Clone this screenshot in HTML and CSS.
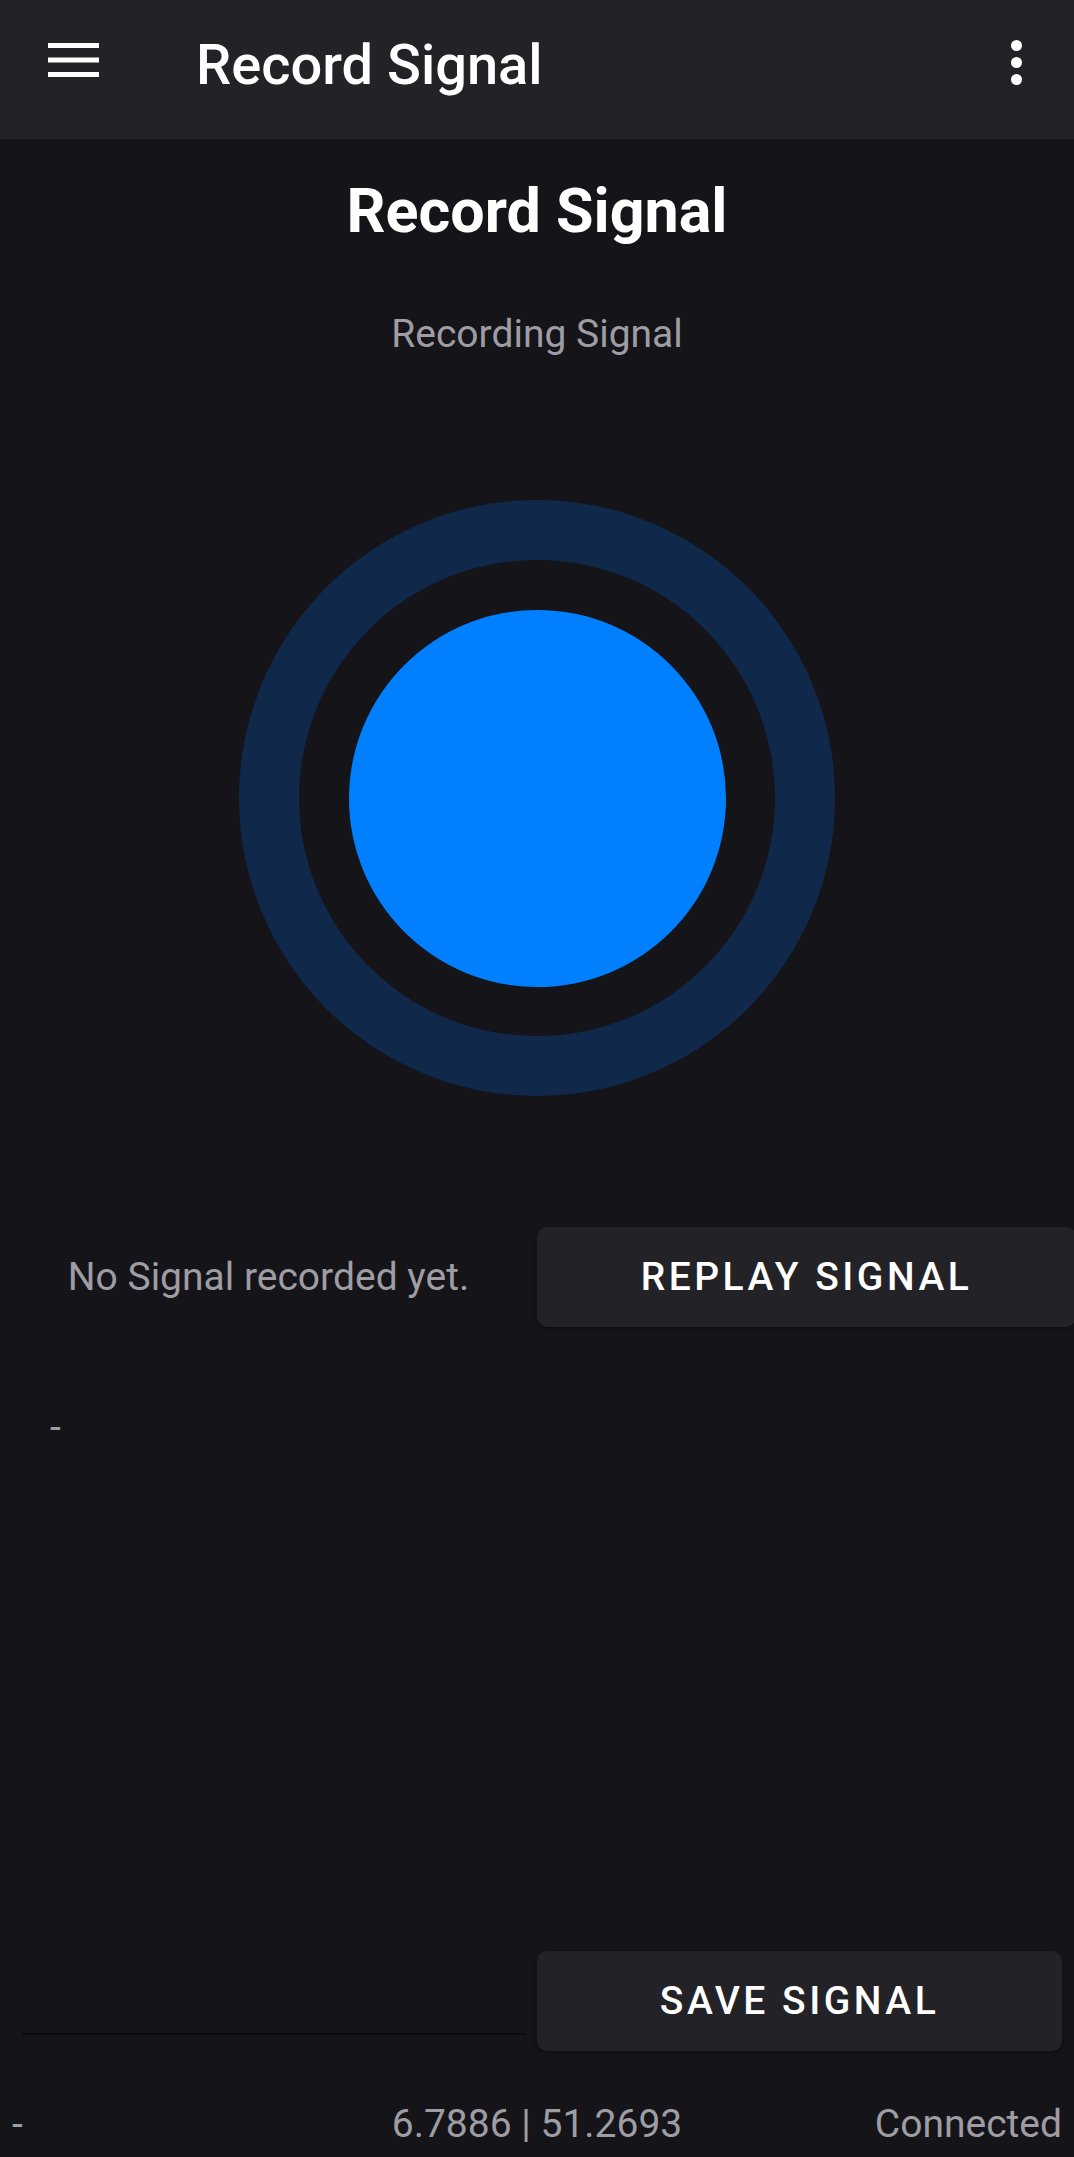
FILE: index.html
```html
<!DOCTYPE html>
<html lang="en">
<head>
<meta charset="utf-8">
<title>Record Signal</title>
<link rel="stylesheet" href="styles.css">
</head>
<body>
<div class="page">
  <header class="appbar">
    <svg class="menu-icon" width="51" height="34" viewBox="0 0 51 34" aria-hidden="true">
      <rect x="0" y="0" width="51" height="5" fill="#fff"/>
      <rect x="0" y="14.5" width="51" height="5" fill="#fff"/>
      <rect x="0" y="29" width="51" height="5" fill="#fff"/>
    </svg>
    <div class="appbar-title">Record Signal</div>
    <svg class="more-icon" width="11" height="45" viewBox="0 0 11 45" aria-hidden="true">
      <circle cx="5.5" cy="5.5" r="5.5" fill="#fff"/>
      <circle cx="5.5" cy="22.5" r="5.5" fill="#fff"/>
      <circle cx="5.5" cy="39.5" r="5.5" fill="#fff"/>
    </svg>
  </header>

  <main class="content">
    <h1 class="heading">Record Signal</h1>
    <p class="status">Recording Signal</p>

    <div class="record">
      <div class="ring">
        <div class="gap">
          <div class="dot"></div>
        </div>
      </div>
    </div>

    <div class="replay-row">
      <div class="replay-text">No Signal recorded yet.</div>
      <div class="btn btn-replay">REPLAY SIGNAL</div>
    </div>

    <div class="signal-data">-</div>

    <div class="save-row">
      <div class="name-input"></div>
      <div class="btn btn-save">SAVE SIGNAL</div>
    </div>
  </main>

  <footer class="statusbar">
    <span class="sb-left">-</span>
    <span class="sb-mid">6.7886 | 51.2693</span>
    <span class="sb-right">Connected</span>
  </footer>
</div>
</body>
</html>
```

FILE: styles.css
```css
html, body {
  margin: 0;
  padding: 0;
}

body {
  background: #151419;
  font-family: Roboto, "Noto Sans", "Liberation Sans", sans-serif;
  color: #ffffff;
  overflow-x: hidden;
}

.page {
  width: 1074px;
  min-height: 2157px;
  display: flex;
  flex-direction: column;
}

/* App bar */
.appbar {
  height: 139px;
  background: #232227;
  display: flex;
  align-items: flex-start;
  flex-shrink: 0;
}

.menu-icon {
  display: block;
  margin-top: 43px;
  margin-left: 48px;
}

.appbar-title {
  margin-top: 33px;
  margin-left: 97px;
  font-size: 56px;
  line-height: 64px;
  font-weight: 500;
  color: #ffffff;
  flex: 1;
}

.more-icon {
  display: block;
  margin-top: 40px;
  margin-right: 52px;
}

/* Content */
.content {
  flex: 1;
  display: flex;
  flex-direction: column;
}

.heading {
  margin: 36px 0 0;
  text-align: center;
  font-size: 61px;
  line-height: 72px;
  font-weight: 700;
  color: #ffffff;
}

.status {
  margin: 65px 0 0;
  text-align: center;
  font-size: 39px;
  line-height: 44px;
  color: #9e9da4;
}

.record {
  margin-top: 144px;
  display: flex;
  justify-content: center;
}

.ring {
  width: 596px;
  height: 596px;
  border-radius: 50%;
  background: #10284a;
  display: flex;
  align-items: center;
  justify-content: center;
}

.gap {
  width: 476px;
  height: 476px;
  border-radius: 50%;
  background: #151419;
  display: flex;
  align-items: center;
  justify-content: center;
}

.dot {
  width: 377px;
  height: 377px;
  border-radius: 50%;
  background: #007fff;
}

/* Replay row */
.replay-row {
  margin-top: 131px;
  display: flex;
  align-items: center;
}

.replay-text {
  width: 537px;
  flex-shrink: 0;
  text-align: center;
  font-size: 39px;
  line-height: 44px;
  color: #9e9da4;
}

.btn {
  height: 100px;
  border-radius: 10px;
  background: #232227;
  box-shadow: 0 2px 4px rgba(0, 0, 0, 0.35);
  display: flex;
  align-items: center;
  justify-content: center;
  font-size: 39px;
  font-weight: 500;
  letter-spacing: 3.5px;
  color: #ffffff;
  flex-shrink: 0;
}

.btn-replay {
  width: 539px;
}

.signal-data {
  margin-top: 78px;
  padding-left: 50px;
  font-size: 39px;
  line-height: 44px;
  color: #9e9da4;
  flex: 1;
}

/* Save row */
.save-row {
  display: flex;
  align-items: flex-end;
}

.name-input {
  width: 504px;
  margin-left: 22px;
  margin-right: 11px;
  margin-bottom: 16px;
  border-bottom: 2px solid #0a0a0d;
}

.btn-save {
  width: 525px;
}

/* Status bar */
.statusbar {
  margin-top: 51px;
  padding: 0 12px 11px;
  display: grid;
  grid-template-columns: 1fr auto 1fr;
  align-items: center;
  font-size: 39px;
  line-height: 44px;
  color: #9e9da4;
}

.sb-left {
  justify-self: start;
}

.sb-mid {
  justify-self: center;
}

.sb-right {
  justify-self: end;
}
```
